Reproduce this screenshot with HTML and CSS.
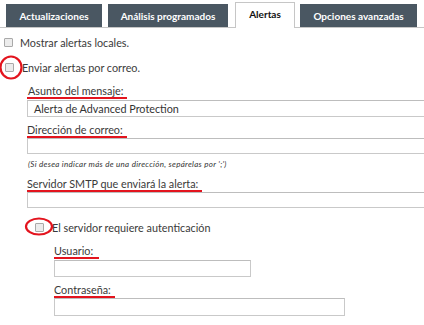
FILE: index.html
```html
<!DOCTYPE html>
<html lang="es">
<head>
    <meta charset="UTF-8">
    <meta name="viewport" content="width=device-width, initial-scale=1.0">
    <title>Alertas</title>
    <link rel="stylesheet" href="styles.css">
</head>
<body>
    <div class="tabs">
        <div class="tab tab-updates">Actualizaciones</div>
        <div class="tab tab-scans">Análisis programados</div>
        <div class="tab tab-alerts active">Alertas</div>
        <div class="tab tab-advanced">Opciones avanzadas</div>
    </div>

    <div class="content">
        <div class="check-row row-local">
            <span class="check"></span>
            <span class="check-text">Mostrar alertas locales.</span>
        </div>

        <div class="check-row row-mail">
            <span class="check"></span>
            <span class="check-text">Enviar alertas por correo.</span>
            <svg class="circle circle-mail" width="25" height="25" viewBox="0 0 25 25">
                <ellipse cx="12" cy="12.5" rx="10.5" ry="11" fill="none" stroke="#e3141e" stroke-width="2.2"/>
            </svg>
        </div>

        <div class="fields">
            <label class="field-label label-subject">Asunto del mensaje:</label>
            <div class="input wide">Alerta de Advanced Protection</div>

            <label class="field-label label-address">Dirección de correo:</label>
            <div class="input wide short"></div>
            <p class="hint">(Si desea indicar más de una dirección, sepárelas por ';')</p>

            <label class="field-label label-smtp">Servidor SMTP que enviará la alerta:</label>
            <div class="input wide short"></div>

            <div class="check-row row-auth">
                <span class="check"></span>
                <span class="check-text">El servidor requiere autenticación</span>
                <svg class="circle circle-auth" width="30" height="19" viewBox="0 0 30 19">
                    <ellipse cx="15" cy="9.5" rx="13" ry="8" fill="none" stroke="#e3141e" stroke-width="2.2"/>
                </svg>
            </div>

            <div class="auth">
                <label class="field-label label-user">Usuario:</label>
                <div class="input user"></div>

                <label class="field-label label-pass">Contraseña:</label>
                <div class="input pass"></div>
            </div>
        </div>
    </div>
</body>
</html>
```

FILE: styles.css
```css
body {
    font-family: Lato, "Open Sans", sans-serif;
    margin: 0;
    padding: 0;
    background-color: white;
    color: #3a3a3a;
    width: 424px;
    height: 325px;
    overflow: hidden;
}

.tabs {
    display: flex;
    align-items: flex-end;
    height: 27px;
    padding-left: 6px;
    border-bottom: 1px solid #c6c6c6;
}

.tab {
    height: 23px;
    background-color: #4a5762;
    color: white;
    font-size: 10px;
    font-weight: bold;
    display: flex;
    align-items: center;
    justify-content: center;
    box-sizing: border-box;
}

.tab-updates {
    width: 96px;
    margin-right: 6px;
}

.tab-scans {
    width: 120px;
    margin-right: 7px;
}

.tab-alerts {
    width: 60px;
    margin-right: 5px;
}

.tab-advanced {
    width: 117px;
}

.tab.active {
    height: 26px;
    background-color: white;
    color: #111;
    border: 1px solid #c6c6c6;
    border-bottom: none;
    margin-bottom: -1px;
    padding-bottom: 4px;
}

.content {
    position: relative;
}

.check-row {
    position: relative;
    display: flex;
    align-items: center;
    height: 14px;
    font-size: 10.8px;
}

.row-local {
    margin-top: 7px;
    padding-left: 4px;
}

.row-mail {
    margin-top: 11px;
    padding-left: 5px;
}

.check {
    width: 7px;
    height: 7px;
    border: 1px solid #a9a9a9;
    border-radius: 1px;
    background-color: #ececec;
    margin-right: 7px;
}

.row-mail .check {
    margin-right: 8px;
}

.circle {
    position: absolute;
}

.circle-mail {
    left: -1px;
    top: -5px;
}

.fields {
    padding-left: 27px;
}

.field-label {
    display: inline-block;
    height: 13px;
    line-height: 13px;
    font-size: 10.8px;
    border-bottom: 2px solid #e3141e;
    padding-right: 4px;
    margin-top: 6px;
}

.label-subject {
    margin-top: 10px;
    padding-left: 1px;
}

.label-smtp {
    margin-top: 7px;
}

.input {
    box-sizing: border-box;
    height: 17px;
    border: 1px solid #c9c9c9;
    border-top-color: #bdbdbd;
    margin-top: 1px;
    font-size: 10.8px;
    line-height: 15px;
    padding-left: 6px;
    color: #333;
}

.input.wide {
    width: 397px;
    border-right: none;
}

.input.short {
    height: 16px;
    margin-top: 0;
}

.hint {
    margin: 4px 0 0 1px;
    font-size: 8px;
    letter-spacing: 0.3px;
    font-style: italic;
    line-height: 12px;
    color: #333;
}

.row-auth {
    margin-top: 12px;
    padding-left: 8px;
}

.row-auth .check {
    margin-right: 8px;
}

.circle-auth {
    left: -3px;
    top: -3px;
}

.auth {
    padding-left: 27px;
}

.label-user {
    margin-top: 10px;
    padding-right: 6px;
}

.input.user {
    width: 197px;
}

.input.pass {
    width: 291px;
    height: 18px;
    margin-top: 0;
}
```
